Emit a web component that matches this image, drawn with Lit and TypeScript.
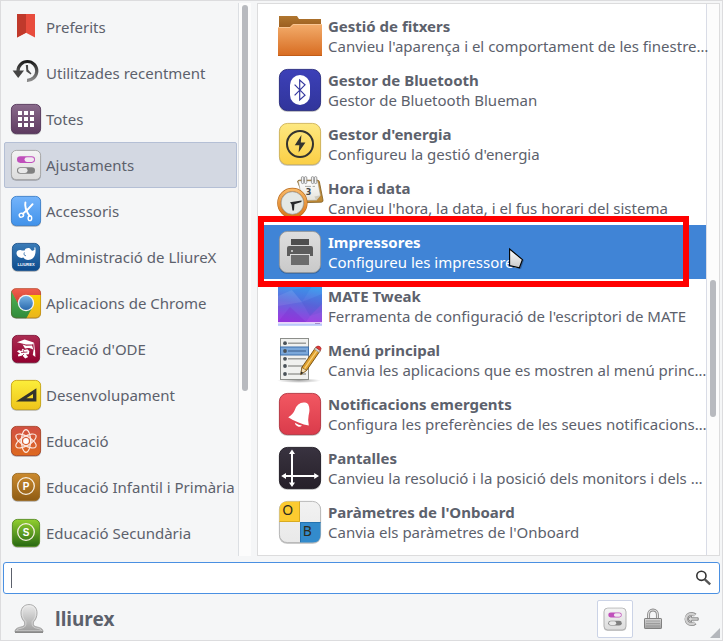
import { LitElement, html, svg, css, TemplateResult } from "lit";
import { customElement, state } from "lit/decorators.js";
import { classMap } from "lit/directives/class-map.js";

type Drawing = TemplateResult;

const grad = (id: string, top: string, bottom: string) => svg`
  <linearGradient id=${id} x1="0" y1="0" x2="0" y2="1">
    <stop offset="0" stop-color=${top}></stop><stop offset="1" stop-color=${bottom}></stop>
  </linearGradient>`;

/* Rounded tile with a vertical gradient, a dark rim and a soft shadow. */
const tile = (id: string, top: string, bottom: string, at: number, size: number, r: number, rim: string) => svg`
  <defs>${grad(id, top, bottom)}</defs>
  <rect x=${at} y=${at + 0.8} width=${size} height=${size} rx=${r} fill="#000" opacity=".25"></rect>
  <rect x=${at + 0.4} y=${at + 0.4} width=${size - 0.8} height=${size - 0.8} rx=${r} fill="url(#${id})" stroke=${rim} stroke-width=".9"></rect>`;

const smallTile = (id: string, a: string, b: string, rim: string) => tile(id, a, b, 1, 30, 5, rim);
const insetTile = (id: string, a: string, b: string, rim: string) => tile(id, a, b, 2, 28, 5, rim);
const bigTile = (id: string, a: string, b: string, rim: string) => tile(id, a, b, 3, 42, 8, rim);

const toggles = (id: string) => svg`
  ${smallTile(id, "#f4f4f4", "#dcdcdc", "#a4a4a4")}
  <rect x="7" y="7.3" width="18" height="6.6" rx="3.3" fill="#c04fbb"></rect>
  <rect x="14.5" y="8.2" width="9.6" height="4.8" rx="2.4" fill="#f1e9f1"></rect>
  <rect x="7" y="18.2" width="18" height="6.6" rx="3.3" fill="#808080"></rect>
  <rect x="8" y="19.1" width="9.6" height="4.8" rx="2.4" fill="#e9e9e9"></rect>`;

const badge = (id: string, a: string, b: string, rim: string, letter: string) => svg`
  ${insetTile(id, a, b, rim)}
  <circle cx="16" cy="15" r="8.3" fill="none" stroke="#f7efe2" stroke-width="1.3"></circle>
  <text x="16" y="18.6" text-anchor="middle" class="badge">${letter}</text>`;

const categoryIcons: Record<string, Drawing> = {
  preferits: svg`
    <path d="M7 3H25V26.5L16 21.7L7 26.5Z" fill="#e84c3d"></path>
    <path d="M7 3H16V21.7L7 26.5Z" fill="#c0392b"></path>`,
  recent: svg`
    <defs>${grad("g-rec", "#1c1c1c", "#8a8a8a")}</defs>
    <path d="M8 14A9.4 9.4 0 1 1 17 23.3" fill="none" stroke="url(#g-rec)" stroke-width="3.2"></path>
    <path d="M2.6 13.6H14L8.2 21Z" fill="#444"></path>
    <path d="M15.8 8L18 8L18.2 12.8L21.4 16.6L20.8 17.4L16.4 14.4Z" fill="#4a4a4a"></path>`,
  totes: svg`
    ${smallTile("g-tot", "#8a6b8c", "#5d3a60", "#54365a")}
    ${[8, 14, 20].map((y) => [8, 14, 20].map((x) => svg`<rect x=${x} y=${y} width="4" height="4" fill="#fff"></rect>`))}`,
  ajustaments: toggles("g-aju"),
  accessoris: svg`
    ${smallTile("g-acc", "#74b4fb", "#4192ea", "#3b7fcb")}
    <path d="M15.4 7.4C14.6 11 15.4 15 19.6 21" stroke="#fff" stroke-width="1.9" fill="none" stroke-linecap="round"></path>
    <path d="M22.6 9.2C19.5 13 16.6 16 12.8 18.8" stroke="#fff" stroke-width="1.9" fill="none" stroke-linecap="round"></path>
    <ellipse cx="11.4" cy="20.2" rx="2.2" ry="1.9" fill="none" stroke="#fff" stroke-width="1.4" transform="rotate(-25 11.4 20.2)"></ellipse>
    <ellipse cx="19.9" cy="23.2" rx="1.8" ry="2.4" fill="none" stroke="#fff" stroke-width="1.4"></ellipse>`,
  lliurex: svg`
    ${insetTile("g-lli", "#3b7cb8", "#0c4a8c", "#1d558f")}
    <path d="M6.5 12.6C6.3 10 8.6 8.8 11 9.2C12.6 9.4 13.8 9.8 14.6 9.4C15.4 7 19.4 6.2 20.8 8.4C21.4 9.4 22.2 9.8 23.4 9.6L24.6 8.6L24.2 6.4L25.4 6.4L25.6 9.2C25.6 14 24 17.4 20.6 18.6C17.6 19.6 14.6 18.8 13.4 16.6C10 17.6 6.8 15.8 6.5 12.6Z" fill="#fff"></path>
    <path d="M14.4 11.4C13.4 13.4 14.4 15.2 16 14.6" stroke="#2c6aa6" stroke-width=".8" fill="none"></path>
    <text x="16" y="25.4" text-anchor="middle" class="micro">LLIUREX</text>`,
  chrome: svg`
    <defs><clipPath id="c-chr"><rect x="1" y="1.2" width="30" height="30" rx="5"></rect></clipPath>${grad("g-chb", "#77b3e4", "#2a69ad")}
      ${grad("g-chy", "#ffd500", "#e8b320")}${grad("g-chg", "#57b95a", "#2f8a3a")}${grad("g-chr", "#f2604f", "#d2402f")}</defs>
    <rect x="1" y="1.8" width="30" height="30" rx="5" fill="#000" opacity=".3"></rect>
    <g clip-path="url(#c-chr)">
      <path d="M16 7H32V32H15Z" fill="url(#g-chy)"></path>
      <path d="M0 0L9 18L22 21L16 32H0Z" fill="url(#g-chg)"></path>
      <path d="M1 1H32V8H16L8.6 17.5L1.2 4Z" fill="url(#g-chr)"></path>
    </g>
    <circle cx="16" cy="16" r="8.2" fill="#f4f4f4"></circle><circle cx="16" cy="16" r="6.9" fill="url(#g-chb)"></circle>
    <rect x="1.4" y="1.6" width="29.2" height="29.2" rx="5" fill="none" stroke="#7a4a20" stroke-opacity=".35"></rect>`,
  ode: svg`
    ${insetTile("g-ode", "#ab2c52", "#92002f", "#7f1338")}
    <path d="M7 9.2L14.6 6.4L23.8 9.6L22.4 11.4L16 11.6Z" fill="#fff"></path>
    <path d="M12.6 11.4L16.2 12.8L22 12.4L23.6 17C20.6 14.6 17.4 14.6 15 15.4Z" fill="#fff"></path>
    <path d="M23.6 10L24.6 18" stroke="#fff" stroke-width=".8"></path>
    <path d="M23.6 17L25 17L25.4 24L22.8 22Z" fill="#fff"></path>
    <path d="M7 18.6L9 17L11.4 18.2L12.4 15.8L14.6 17L17.4 16.2L19.4 18.2L18.8 21.2L16 21.4L18.2 24L15.2 25.4L12.4 22.4L8.4 23.6L7.8 21.8L10 20.4Z" fill="#fff"></path>
    <path d="M11 19.6L17.4 19M14 21L12 23M13 17L14 19" stroke="#9a1740" stroke-width=".8"></path>`,
  desenvolupament: svg`
    ${smallTile("g-des", "#fcee3a", "#eec41b", "#c8a512")}
    <path d="M6 22.4L26.4 9.2V22.4ZM16.4 19.2H23V14.9Z" fill="#33332d" fill-rule="evenodd"></path>`,
  educacio: svg`
    ${smallTile("g-edu", "#d14f43", "#de6a20", "#a84528")}
    ${[0, 60, 120].map((a) => svg`<ellipse cx="16" cy="16" rx="4.6" ry="11.4" fill="none" stroke="#fbe9e2" stroke-width="1.1" transform="rotate(${a} 16 16)"></ellipse>`)}
    <circle cx="16" cy="16" r="5.6" fill="none" stroke="#fbe9e2" stroke-width=".7"></circle>
    <circle cx="16" cy="16" r="2.9" fill="#fff"></circle>`,
  primaria: badge("g-pri", "#cb8a2e", "#8f5c14", "#9a6a22", "P"),
  secundaria: badge("g-sec", "#92cf2f", "#276812", "#568c20", "S"),
};

const appIcons: Record<string, Drawing> = {
  fitxers: svg`
    <defs>${grad("g-fol", "#f3ad6c", "#d76b20")}${grad("g-fob", "#b0762f", "#925419")}</defs>
    <path d="M3 4H21L23 7H45V20H3Z" fill="url(#g-fob)"></path>
    <path d="M2 15H14L17 12H46V44H2Z" fill="url(#g-fol)"></path>
    <path d="M2 15.5H14.2L17.2 12.5H46" stroke="#f8c592" fill="none"></path>
    <path d="M2 43.5H46" stroke="#c15c18"></path>`,
  bluetooth: svg`
    ${bigTile("g-blu", "#3c40b8", "#31359b", "#282b7e")}
    <rect x="14" y="9" width="20" height="30" rx="10" fill="#fff"></rect>
    <path d="M18.6 18.6L29 29.2L23.7 34V14L29 18.8L18.6 29.4" fill="none" stroke="#34389f" stroke-width="1.2"></path>`,
  energia: svg`
    ${bigTile("g-ene", "#fde881", "#fbcf45", "#d0b358")}
    <circle cx="24" cy="24" r="13" fill="none" stroke="#33332f" stroke-width="2"></circle>
    <path d="M25.4 15L18.8 25.2H23.3L22.6 32.6L29.4 22.6H24.8Z" fill="#33332f"></path>`,
  hora: svg`
    <defs>${grad("g-clk", "#f8b866", "#d9781c")}${grad("g-pap", "#ffffff", "#e4e2da")}</defs>
    <path d="M21.6 7.6Q21.8 6.2 23.2 6.2H41.4Q43 6.2 43.4 7.8L47 26.2Q47.2 28 45.4 28.2L30 28.6Z" fill="#c08a35" stroke="#7d5a1e" stroke-width=".8"></path>
    <path d="M22.4 7H41.6L44.4 21.4L40.4 26.2L26 26.6Z" fill="url(#g-pap)" stroke="#a39c8a" stroke-width=".5"></path>
    <path d="M38.4 22.6L44.4 21.2L40.2 26.4Z" fill="#cfcbbf"></path>
    <path d="M29 12.4H35M36.6 12.4H39" stroke="#a8a8a4" stroke-width="1"></path>
    ${[25.4, 28.4, 35.4, 38.4].map((x) => svg`<rect x=${x} y="2.6" width="2.4" height="7" rx="1.2" fill="#f2f2f2" stroke="#777" stroke-width=".7"></rect>`)}
    <text x="32.6" y="20.6" text-anchor="middle" class="day">3</text>
    <circle cx="16.4" cy="29" r="13.2" fill="#e4e8e4" stroke="#b7691d" stroke-width="4"></circle>
    <circle cx="16.4" cy="29" r="13.2" fill="none" stroke="url(#g-clk)" stroke-width="2.8"></circle>
    <circle cx="16.4" cy="29" r="11.3" fill="none" stroke="#a4a7a2" stroke-width=".8"></circle>
    <path d="M14 28.2L25.6 26.4L25.4 28L18.4 30.2L18 36.4L16.4 36.6L15.6 30.6Z" fill="#26282a"></path>`,
  impressores: svg`
    ${bigTile("g-imp", "#dedede", "#c9c9c9", "#999")}
    <rect x="15" y="11" width="18" height="6" fill="#4e4e4e"></rect>
    <path d="M13 18H35Q37 18 37 20V28H34V26.4H14V28H11V20Q11 18 13 18Z" fill="#5c5c5c"></path>
    <circle cx="16" cy="23" r="1" fill="#ddd"></circle>
    <path d="M14 26.5H34" stroke="#dcdcdc"></path>
    <rect x="15" y="27" width="18" height="10" fill="#6c6c6c"></rect>`,
  tweak: svg`
    <defs><linearGradient id="g-twk" x1=".6" y1="0" x2=".4" y2="1"><stop offset="0" stop-color="#3fa0ee"></stop><stop offset=".5" stop-color="#6069dd"></stop><stop offset="1" stop-color="#9b3ce0"></stop></linearGradient></defs>
    <rect x="2" y="3" width="44" height="37" fill="url(#g-twk)"></rect>
    <path d="M2 14L16 8L26 20L2 24Z" fill="#fff" opacity=".08"></path>
    <path d="M26 20L46 12V30L34 34Z" fill="#2b3fc0" opacity=".14"></path>
    <path d="M2 40L14 25L30 40Z" fill="#7a2ad0" opacity=".3"></path>
    <path d="M16 8L36 4L26 20Z" fill="#2a70dd" opacity=".2"></path>
    <path d="M34 34L46 22V40H30Z" fill="#ca50ea" opacity=".22"></path>
    <rect x="2" y="40" width="44" height="1.6" fill="#ead4fa"></rect><rect x="2" y="41.6" width="44" height="2.2" fill="#b9c9fa"></rect>
    <rect x="39" y="41" width="5" height="1" fill="#a58fc8"></rect>`,
  menu: svg`
    <defs><radialGradient id="g-shd"><stop offset="0" stop-color="#000" stop-opacity=".35"></stop><stop offset="1" stop-color="#000" stop-opacity="0"></stop></radialGradient></defs>
    <ellipse cx="23" cy="44.6" rx="22" ry="2.4" fill="url(#g-shd)"></ellipse>
    <rect x="4.5" y="2.5" width="28" height="41" fill="#f0f1ef" stroke="#8c8e8a"></rect>
    <rect x="4.5" y="11" width="28" height="8" fill="#7ba8da" stroke="#3f70ac"></rect>
    ${[7.2, 15, 22.8, 30, 38].map((y) => svg`<circle cx="9" cy=${y} r="1.9" fill="#4a5258"></circle><path d="M12 ${y}H30" stroke=${y === 15 ? "#4a6f9c" : "#8e908d"} stroke-width="1.3"></path>`)}
    <path d="M24.8 38.4L25.9 31.4L39.6 11.6L44.2 14.8L30.6 34.4Z" fill="#dfa02e" stroke="#6f4a0c" stroke-width=".9"></path>
    <path d="M28 33.4L41.8 13.4" stroke="#f7d27c" stroke-width="1.2"></path>
    <path d="M24.8 38.4L25.9 31.4L30.6 34.4Z" fill="#f0dcb4" stroke="#6f4a0c" stroke-width=".6"></path>
    <path d="M24.7 38.5L25.2 35.6L27.2 36.8Z" fill="#222"></path>
    <path d="M38.4 13.2L39.8 11.4L44.4 14.6L43 16.4Z" fill="#d5d7d2" stroke="#777" stroke-width=".5"></path>
    <path d="M39.8 11.2Q42 9 44.2 10.8Q46 12.4 44.4 14.6Z" fill="#e23a3a" stroke="#9c1a1a" stroke-width=".6"></path>`,
  notificacions: svg`
    ${bigTile("g-not", "#f25862", "#da3b4b", "#b33340")}
    <path d="M27.6 12.6Q30.6 11.8 32.2 14.2Q34.4 19 32.6 25.6Q31.6 30 32.8 35.4Q28 35 22.6 32.6Q16 29.8 12.2 27.2Q17 24.6 18.8 20Q21.4 12.8 27.6 12.6Z" fill="#fff"></path>
    <path d="M18.8 32.8Q23.4 35.6 26 35.4Q24.6 37.4 22 36.6Q19 35.4 18.8 32.8Z" fill="#fff"></path>`,
  pantalles: svg`
    ${bigTile("g-pan", "#393340", "#262029", "#1e1a22")}
    <path d="M16 8V40M8 32H41" stroke="#fff" stroke-width="2"></path>
    <path d="M16 5.4L19 10H13ZM16 43L19 38.4H13ZM5.2 32L10 29V35ZM43 32L38.2 29V35Z" fill="#fff"></path>`,
  onboard: svg`
    ${bigTile("g-onb", "#f2f2f2", "#e9e9e9", "#b4b4b4")}
    <path d="M24 3.5V24H3.5V11.5Q3.5 3.5 11.5 3.5Z" fill="#fccb30"></path>
    <path d="M23.5 3.5V23.5H3.5" fill="none" stroke="#d9ab20"></path>
    <path d="M24 24H44.5V36.5Q44.5 44.5 36.5 44.5H24Z" fill="#338bcc"></path>
    <path d="M24.5 44V24.5H44.5" fill="none" stroke="#2473b0"></path>
    <text x="11.8" y="17.4" text-anchor="middle" class="key">O</text>
    <text x="31.4" y="38" text-anchor="middle" class="key">B</text>`,
};

const categories = [
  ["preferits", "Preferits"],
  ["recent", "Utilitzades recentment"],
  ["totes", "Totes"],
  ["ajustaments", "Ajustaments"],
  ["accessoris", "Accessoris"],
  ["lliurex", "Administració de LliureX"],
  ["chrome", "Aplicacions de Chrome"],
  ["ode", "Creació d'ODE"],
  ["desenvolupament", "Desenvolupament"],
  ["educacio", "Educació"],
  ["primaria", "Educació Infantil i Primària"],
  ["secundaria", "Educació Secundària"],
];

const apps = [
  ["fitxers", "Gestió de fitxers", "Canvieu l'aparença i el comportament de les finestre…"],
  ["bluetooth", "Gestor de Bluetooth", "Gestor de Bluetooth Blueman"],
  ["energia", "Gestor d'energia", "Configureu la gestió d'energia"],
  ["hora", "Hora i data", "Canvieu l'hora, la data, i el fus horari del sistema"],
  ["impressores", "Impressores", "Configureu les impressores"],
  ["tweak", "MATE Tweak", "Ferramenta de configuració de l'escriptori de MATE"],
  ["menu", "Menú principal", "Canvia les aplicacions que es mostren al menú princ…"],
  ["notificacions", "Notificacions emergents", "Configura les preferències de les seues notificacions…"],
  ["pantalles", "Pantalles", "Canvieu la resolució i la posició dels monitors i dels …"],
  ["onboard", "Paràmetres de l'Onboard", "Canvia els paràmetres de l'Onboard"],
];

const reset = css`
  * { box-sizing: border-box; }
  button {
    margin: 0; padding: 0; border: 0; background: none; color: inherit;
    font: inherit; text-align: left; cursor: default;
  }
  svg { display: block; flex: none; }
  .track { flex: none; display: grid; justify-content: center; background: #fcfcfc; }
  .thumb { width: 6px; border-radius: 3px; background: #b8babf; }
`;

@customElement("category-list")
export class CategoryList extends LitElement {
  @state() private current = "ajustaments";

  static styles = [reset, css`
    :host { display: flex; }
    .nav { flex: 1; min-width: 0; padding: 1px 1px 0; border-right: 1px solid #dcdfe3; }
    .item {
      display: flex; align-items: center; gap: 4px; width: 100%; height: 46px;
      padding: 0 0 0 5px; border: 1px solid transparent; border-radius: 2px; white-space: nowrap;
    }
    .current { background: #d3d8e2; border-color: #b4bfd5; }
    .track { width: 12px; grid-template-rows: 2px 7fr 3fr; }
    .thumb { grid-row: 2; }
    .badge { font: bold 10px "Liberation Sans", sans-serif; fill: #fff; }
    .micro { font: bold 4px "Liberation Sans", sans-serif; fill: #fff; }
  `];

  render() {
    return html`
      <nav class="nav" aria-label="Categories">
        ${categories.map(([id, label]) => html`
          <button class=${classMap({ item: true, current: id === this.current })}
            @click=${() => (this.current = id)}>
            <svg width="32" height="32" viewBox="0 0 32 32" aria-hidden="true">${categoryIcons[id]}</svg>
            <span>${label}</span>
          </button>`)}
      </nav>
      <div class="track"><div class="thumb"></div></div>`;
  }
}

@customElement("app-list")
export class AppList extends LitElement {
  static styles = [reset, css`
    :host { display: flex; min-width: 0; border: 1px solid #dcdcdd; background: #fff; }
    .rows { flex: 1; min-width: 0; padding: 5px 0 6px; }
    .row {
      position: relative; display: flex; align-items: center; gap: 4px;
      width: 100%; height: 54px; padding-left: 18px;
    }
    .selected { z-index: 1; background: #4084d6; color: #fff; }
    .text { flex: 1; min-width: 0; margin-right: -4px; line-height: 20px; white-space: nowrap; }
    .name, .about { display: block; overflow: hidden; text-overflow: ellipsis; }
    .name { font-weight: bold; }
    .frame { position: absolute; inset: -9px 17px -8px 0; border: 6px solid #f00; outline: 0; }
    .frame::before, .frame::after {
      content: ""; position: absolute; left: 0; right: 0; height: 3px; background: #fff;
    }
    .frame::before { top: 0; }
    .frame::after { bottom: 0; height: 2px; }
    .pointer { position: absolute; left: 250px; top: 22px; }
    .track { width: 13px; border-left: 1px solid #d9dce6; grid-template-rows: 2fr 1fr 1fr; }
    .thumb { grid-row: 2; }
    .day { font: bold 8px "DejaVu Sans", sans-serif; fill: #444; }
    .key { font: 14px "Noto Sans", sans-serif; fill: #2c2c20; }
  `];

  render() {
    return html`
      <div class="rows">
        ${apps.map(([id, name, about]) => {
          const selected = id === "impressores";
          return html`
            <button class=${classMap({ row: true, selected })}>
              <svg width="48" height="48" viewBox="0 0 48 48" aria-hidden="true">${appIcons[id]}</svg>
              <span class="text"><span class="name">${name}</span><span class="about">${about}</span></span>
              ${selected ? html`
                <span class="frame"></span>
                <svg class="pointer" width="18" height="26" viewBox="0 0 18 26" aria-hidden="true">
                  <defs>${grad("g-ptr", "#fff", "#c9c9c9")}</defs>
                  <path d="M3 3L16 13L13 22L3 20Z" fill="#000" opacity=".25"></path>
                  <path d="M1.6 2L14.4 12.6L11.4 20.8L1.6 18.6Z" fill="url(#g-ptr)" stroke="#000" stroke-width="1.1"></path>
                </svg>` : ""}
            </button>`;
        })}
      </div>
      <div class="track"><div class="thumb"></div></div>`;
  }
}

@customElement("app-root")
export class AppRoot extends LitElement {
  static styles = [reset, css`
    :host {
      position: relative; display: block; box-sizing: border-box; min-height: 100vh; padding: 2px;
      border: 1px solid #dcdcde; background: #f5f6f7; color: #5c616c;
      font: 15px "Noto Sans", sans-serif;
    }
    .panes { display: grid; grid-template-columns: 248px minmax(0, 1fr); gap: 6px; }
    .search {
      display: flex; align-items: center; height: 32px; margin-top: 6px; padding: 0 7px;
      border: 1px solid #4a90e2; border-radius: 3px; background: #fff;
    }
    .caret { width: 1px; height: 20px; background: #5c616c; }
    .query {
      flex: 1; min-width: 0; height: 28px; padding: 0; border: 0; outline: 0; background: none;
      color: inherit; font: inherit; caret-color: transparent;
    }
    .footer { display: flex; align-items: center; gap: 2px; padding: 6px 11px 0 9px; }
    .user { display: flex; align-items: center; gap: 10px; margin-right: auto; font-size: 19px; font-weight: bold; }
    .tool {
      display: flex; align-items: center; justify-content: center; width: 36px; height: 38px;
      border: 1px solid transparent; border-radius: 2px;
    }
    .pressed { background: #fff; border-color: #cbd3e6; }
    .grip { position: absolute; right: 2px; bottom: 2px; }
  `];

  render() {
    return html`
      <div class="panes"><category-list></category-list><app-list></app-list></div>
      <label class="search">
        <span class="caret"></span>
        <input class="query" type="text" aria-label="Cerca">
        <svg width="18" height="18" viewBox="0 0 18 18" aria-hidden="true">
          <circle cx="7.4" cy="6.8" r="4.6" fill="none" stroke="#333" stroke-width="1.6"></circle>
          <path d="M10.8 10.4L16.2 15.4" stroke="#555" stroke-width="2.4"></path>
        </svg>
      </label>
      <footer class="footer">
        <button class="user">
          <svg width="33" height="32" viewBox="0 0 33 32" aria-hidden="true">
            <defs>${grad("g-usr", "#ececec", "#9c9c9c")}</defs>
            <path d="M17 1.6C22 1.6 25 5 25 10C25 13.6 23.8 16.6 21.4 19C20.8 22.6 22 23.4 25 24C29 24.8 31 26 31 29H3C3 26 5 24.8 9 24C12 23.4 13.2 22.6 12.6 19C10.2 16.6 9 13.6 9 10C9 5 12 1.6 17 1.6Z" fill="url(#g-usr)" stroke="#a9a9a9"></path>
            <path d="M17 2.8C21.4 2.8 23.8 5.6 23.8 10C23.8 13.6 22.6 16.2 20.3 18.4C19.6 23 21 24.4 24.8 25.2C28 25.8 29 26.4 29.6 27.8H4.4C5 26.4 6 25.8 9.2 25.2C13 24.4 14.4 23 13.7 18.4C11.4 16.2 10.2 13.6 10.2 10C10.2 5.6 12.6 2.8 17 2.8Z" fill="none" stroke="#f3f3f3" stroke-opacity=".7" stroke-width=".7"></path>
            <path d="M3 29.2H31" stroke="#777" stroke-width="1.2"></path>
          </svg>
          <span>lliurex</span>
        </button>
        <button class="tool pressed" aria-label="Ajustaments">
          <svg width="24" height="24" viewBox="0 0 32 32" aria-hidden="true">${toggles("g-tgl")}</svg>
        </button>
        <button class="tool" aria-label="Bloca la pantalla">
          <svg width="20" height="22" viewBox="0 0 20 22" aria-hidden="true">
            <defs>${grad("g-lck", "#d8d8d8", "#a0a0a0")}</defs>
            <path d="M5.6 11V6.4A4.4 4.4 0 0 1 14.4 6.4V11" fill="none" stroke="#858585" stroke-width="2.9"></path>
            <path d="M5.6 11V6.4A4.4 4.4 0 0 1 14.4 6.4V11" fill="none" stroke="#e2e2e2" stroke-width="1.2"></path>
            <rect x="1.5" y="10.5" width="17" height="10" rx=".6" fill="url(#g-lck)" stroke="#808080"></rect>
            <path d="M3 13H17M3 15.5H17M3 18H17" stroke="#8f8f8f" stroke-width=".7"></path>
          </svg>
        </button>
        <button class="tool" aria-label="Ix">
          <svg width="18" height="18" viewBox="0 0 18 18" aria-hidden="true">
            <path d="M13.2 12.8A5.2 5.2 0 1 1 13.2 5.2" fill="none" stroke="#8a8a8a" stroke-width="3.8"></path>
            <path d="M13 12.6A5.2 5.2 0 1 1 13 5.4" fill="none" stroke="#d0d0d0" stroke-width="2.3"></path>
            <path d="M5.8 9L9.6 5.8V7.8H16.2V10.2H9.6V12.2Z" fill="#d8d8d8" stroke="#808080" stroke-width=".9"></path>
          </svg>
        </button>
      </footer>
      <svg class="grip" width="10" height="10" viewBox="0 0 10 10" aria-hidden="true"><path d="M10 0V10H0Z" fill="#b4b7bc"></path></svg>`;
  }
}
